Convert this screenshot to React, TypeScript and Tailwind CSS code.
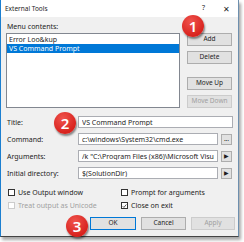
import React from 'react';

const font = { fontFamily: '"Segoe UI", "Noto Sans", sans-serif' };

const Badge: React.FC<{ n: number; className: string }> = ({ n, className }) => (
  <div
    className={`absolute w-[22px] h-[22px] rounded-full flex items-center justify-center text-white text-[15px] font-semibold leading-none shadow-[1px_2px_2px_rgba(0,0,0,0.45)] bg-[radial-gradient(circle_at_40%_30%,#f0534d,#d8231e_70%)] ${className}`}
  >
    {n}
  </div>
);

const Btn: React.FC<{ label: string; disabled?: boolean; className?: string }> = ({ label, disabled, className = '' }) => (
  <div
    className={`h-[13px] flex items-center justify-center border border-[#adadad] bg-[#e1e1e1] text-[6.5px] leading-none ${
      disabled ? 'text-[#a0a0a0] border-[#cccccc] bg-[#cccccc]' : 'text-[#1e1e1e]'
    } ${className}`}
  >
    {label}
  </div>
);

const Check: React.FC<{ label: string; checked?: boolean; disabled?: boolean }> = ({ label, checked, disabled }) => (
  <div className={`flex items-center gap-[3px] text-[7px] leading-none ${disabled ? 'text-[#a0a0a0]' : 'text-[#1e1e1e]'}`}>
    <div className={`w-[7px] h-[7px] border bg-white flex items-center justify-center ${disabled ? 'border-[#cccccc]' : 'border-[#333333]'}`}>
      {checked && (
        <svg width="6" height="6" viewBox="0 0 6 6">
          <path d="M0.8 3.2 L2.3 4.7 L5.2 1.2" fill="none" stroke="#222" strokeWidth="0.9" />
        </svg>
      )}
    </div>
    <span>{label}</span>
  </div>
);

const Row: React.FC<{ label: string; value: string; btn?: React.ReactNode }> = ({ label, value, btn }) => (
  <div className="flex items-center h-[12px]">
    <div className="w-[71px] text-[7px] leading-none text-[#1e1e1e]">{label}</div>
    <div
      className={`h-[12px] border border-[#abadb3] bg-white flex items-center px-[3px] overflow-hidden ${
        btn ? 'w-[140px]' : 'w-[155px]'
      }`}
    >
      <span className="block w-full overflow-hidden whitespace-nowrap text-[7px] leading-none text-[#1e1e1e]">{value}</span>
    </div>
    {btn && (
      <div className="ml-[3px] w-[11px] h-[11px] border border-[#adadad] bg-[#e1e1e1] flex items-center justify-center text-[6.5px] leading-none text-[#1e1e1e]">
        {btn}
      </div>
    )}
  </div>
);

export default function App() {
  return (
    <div className="relative w-[244px] h-[242px] bg-white overflow-hidden" style={font}>
      <div className="w-[239px] h-[237px] border-l border-l-[#1c7fd0] border-r border-r-[#6d8fae] border-b border-b-[#444444] shadow-[2px_3px_3px_rgba(0,0,0,0.35)] flex flex-col">
        <div className="h-[17px] bg-white flex items-center pl-[4px] pr-[8px] text-[6.5px] text-[#1e1e1e]">
          <span className="flex-1">External Tools</span>
          <span className="mr-[18px] text-[7px]">?</span>
          <span className="text-[8px]">✕</span>
        </div>
        <div className="flex-1 bg-[#f0f0f0] pl-[5px] pt-[6px]">
          <div className="text-[7px] leading-none text-[#1e1e1e] pl-[1px] h-[10px]">Menu contents:</div>
          <div className="flex">
            <div className="w-[174px] h-[75px] border border-[#828790] bg-white pt-[1px] text-[7px] leading-none">
              <div className="h-[9px] px-[2px] flex items-center text-[#1e1e1e]">Error Loo&amp;kup</div>
              <div className="h-[9px] px-[2px] flex items-center bg-[#0078d7] text-white">VS Command Prompt</div>
            </div>
            <div className="ml-[7px] w-[45px] flex flex-col">
              <Btn label="Add" />
              <Btn label="Delete" className="mt-[5px]" />
              <Btn label="Move Up" className="mt-[13px]" />
              <Btn label="Move Down" disabled className="mt-[5px]" />
            </div>
          </div>
          <div className="mt-[8px] pl-[1px] flex flex-col gap-[5px]">
            <Row label="Title:" value="VS Command Prompt" />
            <Row label="Command:" value="c:\windows\System32\cmd.exe" btn="..." />
            <Row label="Arguments:" value={'/k "C:\\Program Files (x86)\\Microsoft Visual Studio'} btn={<span className="text-[6px]">▶</span>} />
            <Row label="Initial directory:" value="$(SolutionDir)" btn={<span className="text-[6px]">▶</span>} />
          </div>
          <div className="mt-[10px] pl-[2px] grid grid-cols-[113px_1fr] gap-y-[6px]">
            <Check label="Use Output window" />
            <Check label="Prompt for arguments" />
            <Check label="Treat output as Unicode" disabled />
            <Check label="Close on exit" checked />
          </div>
          <div className="mt-[8px] flex gap-[5px] pl-[84px]">
            <Btn label="OK" className="w-[46px] !border-[#0078d7] border-[1.5px]" />
            <Btn label="Cancel" className="w-[45px]" />
            <Btn label="Apply" disabled className="w-[44px]" />
          </div>
        </div>
      </div>
      <Badge n={1} className="left-[182px] top-[15px]" />
      <Badge n={2} className="left-[54px] top-[112px]" />
      <Badge n={3} className="left-[66px] top-[215px]" />
    </div>
  );
}
